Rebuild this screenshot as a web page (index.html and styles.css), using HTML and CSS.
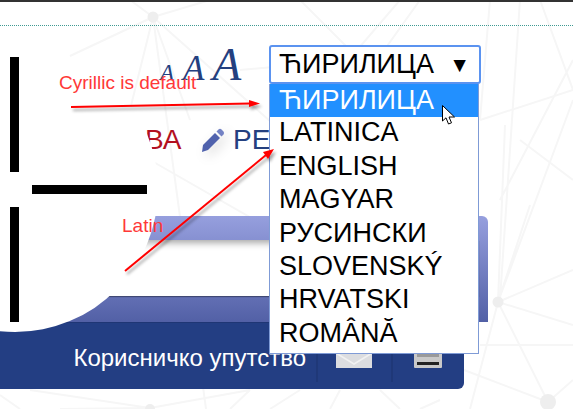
FILE: index.html
```html
<!DOCTYPE html>
<html lang="sr">
<head>
<meta charset="utf-8">
<title>Језик</title>
<link rel="stylesheet" href="styles.css">
</head>
<body>
<div class="page">
  <svg class="network" width="573" height="409" viewBox="0 0 573 409">
    <g class="net-lines">
      <path d="M153 17 70 56M153 17 206 409M153 17 120 150M153 17 280 130M153 17 210 0M130 0 153 17M153 17 190 120M150 160 290 240M240 70 330 62"/>
      <path d="M300 0 400 100M400 0 340 70M420 0 370 70M490 0 480 120M520 0 500 300M498 302 573 270M498 302 573 325M498 302 548 402M498 302 505 125M498 302 530 205M498 302 470 409M498 302 573 100M480 345 573 345M464 370 548 402M548 402 573 380M573 60 500 200M540 0 573 90"/>
      <path d="M150 408 30 390M150 408 60 409M150 408 250 390M250 390 230 409M300 390 270 409M340 390 330 409M380 390 400 409M440 400 420 409M0 395 20 409M480 120 573 90M520 140 573 180"/>
    </g>
    <g class="net-nodes">
      <circle cx="153" cy="17" r="5.500"/>
      <circle cx="498" cy="302" r="5.500"/>
      <circle cx="548" cy="402" r="8"/>
      <circle cx="150" cy="409" r="5"/>
    </g>
  </svg>

  <div class="topbar"></div>
  <div class="rule"></div>

  <div class="tools">
    <div class="sizes">
      <span class="size size-s">A</span>
      <span class="size size-m">A</span>
      <span class="size size-l">A</span>
    </div>
    <div class="lang">
      <div class="lang-current">
        <span>ЋИРИЛИЦА</span>
        <span class="lang-caret">▼</span>
      </div>
      <ul class="lang-menu">
        <li class="is-active">ЋИРИЛИЦА</li>
        <li>LATINICA</li>
        <li>ENGLISH</li>
        <li>MAGYAR</li>
        <li>РУСИНСКИ</li>
        <li>SLOVENSKÝ</li>
        <li>HRVATSKI</li>
        <li>ROMÂNĂ</li>
      </ul>
    </div>
  </div>

  <div class="edit">
    <span class="edit-red">ВА</span>
    <svg class="pencil" width="26" height="26" viewBox="0 0 26 26">
      <path class="pencil-body" d="M3 18 15 6l5 5L8 23l-6 2z"/>
      <path class="pencil-cap" d="M16.500 4.500 18.500 2.500q1.500-1.300 3 0l2 2q1.300 1.500 0 3L21.500 9.500z"/>
    </svg>
    <span class="edit-blue">РЕ</span>
  </div>

  <div class="band">
    <div class="band-strip"></div>
  </div>

  <div class="footer">
    <span class="footer-link">Корисничко упутство</span>
    <span class="footer-cell footer-cell-mail">
      <svg width="36" height="17" viewBox="0 0 36 17">
        <rect class="env" width="36" height="17"/>
        <path class="env-fold" d="M0 2 18 13 36 2"/>
      </svg>
    </span>
    <span class="footer-cell footer-cell-print">
      <svg width="28" height="16" viewBox="0 0 28 16">
        <rect class="prn" width="28" height="16" rx="1"/>
        <rect class="prn-top" x="3" y="1" width="22" height="4"/>
        <rect class="prn-slot" x="3" y="10" width="22" height="3"/>
      </svg>
    </span>
  </div>

  <div class="logo">
    <div class="logo-col">
      <i class="bar-v"></i>
      <i class="bar-v"></i>
    </div>
    <i class="bar-h"></i>
  </div>

  <svg class="arrows" width="573" height="409" viewBox="0 0 573 409">
    <defs>
      <filter id="soft" x="-10%" y="-50%" width="120%" height="200%">
        <feDropShadow dx="2" dy="3" stdDeviation="1.500" flood-color="#000" flood-opacity=".35"/>
      </filter>
    </defs>
    <g filter="url(#soft)">
      <path class="arrow-line" d="M71 107 250 103.500"/>
      <path class="arrow-head" d="M249 100 260 103.500 249 107z"/>
      <path class="arrow-line" d="M125 271 266 155"/>
      <path class="arrow-head" d="M263 152 274 149 268 159z"/>
    </g>
  </svg>

  <span class="note note-default">Cyrillic is default</span>
  <span class="note note-latin">Latin</span>

  <svg class="cursor" width="15" height="21" viewBox="0 0 15 21">
    <path class="cursor-shape" d="M.5.5V16L4 12.800 6.500 19 9.500 17.800 7 12H12.500z"/>
  </svg>
</div>
</body>
</html>
```
FILE: styles.css
```css
* { box-sizing: border-box; }
html, body { margin: 0; padding: 0; background: #fff; }
body { font-family: "Liberation Sans", Arial, sans-serif; }

.page {
  position: relative;
  width: 573px;
  height: 409px;
  overflow: hidden;
  background: #fff;
}

.network { position: absolute; left: 0; top: 0; }
.net-lines path { fill: none; stroke: #f6f6f6; stroke-width: 2; }
.net-nodes circle { fill: #eeeeee; }

.topbar { position: relative; height: 2px; background: #333; }
.rule { position: relative; height: 24px; border-bottom: 1px dotted #3f9a92; }

.tools {
  position: relative;
  display: flex;
  align-items: flex-start;
  height: 39px;
  margin-top: 19px;
  padding-left: 160px;
}
.sizes {
  display: flex;
  align-items: baseline;
  width: 109px;
  height: 39px;
  color: #24407f;
  font-family: "Liberation Serif", serif;
  font-style: italic;
  line-height: 39px;
}
.size-s { font-size: 23px; margin-right: 9px; }
.size-m { font-size: 35px; margin-right: 8px; }
.size-l { font-size: 47px; }

.lang { position: relative; z-index: 3; width: 212px; color: #000; font-size: 27px; }
.lang-current {
  display: flex;
  justify-content: space-between;
  align-items: center;
  height: 39px;
  padding: 0 9px 0 8px;
  background: #fff;
  border: 2px solid #5b93f0;
  border-radius: 3px;
}
.lang-caret { font-size: 21px; }
.lang-menu {
  position: absolute;
  left: 0;
  top: 39px;
  width: 210px;
  margin: 0;
  padding: 0 0 1.800px;
  list-style: none;
  background: #fff;
  border: 1px solid #7f9bd6;
  border-top: 0;
}
.lang-menu li { height: 33.400px; line-height: 31px; padding-left: 9px; }
.lang-menu li:first-child { line-height: 32px; }
.lang-menu .is-active { background: #2290ff; color: #fff; }

.edit {
  position: relative;
  display: flex;
  align-items: center;
  height: 34px;
  margin-top: 39px;
  padding-left: 145px;
  font-size: 28px;
  line-height: 34px;
}
.edit-red { color: #b3101f; width: 55px; }
.pencil { filter: blur(.4px) drop-shadow(4px 4px 6px rgba(0, 0, 0, .14)); }
.pencil-body { fill: #5062ad; }
.pencil-cap { fill: #7382c4; }
.edit-blue { color: #24407f; margin-left: 7px; }

.band {
  position: relative;
  display: flex;
  align-items: center;
  width: 488px;
  height: 106px;
  margin-top: 59px;
  background: linear-gradient(#969fde, #5260a6);
  border-radius: 0 6px 0 0;
}
.band-strip {
  width: 479px;
  height: 56px;
  margin-top: -2px;
  background: #fff;
  box-shadow: inset 0 8px 7px -5px rgba(0, 0, 0, .35), 0 1px 1px rgba(0, 0, 0, .35);
}

.footer {
  position: relative;
  display: flex;
  justify-content: flex-end;
  align-items: flex-start;
  width: 464px;
  height: 67px;
  background: #233e83;
  border-top: 1px solid #1f3675;
  border-radius: 0 0 6px 0;
  color: #fff;
}
.footer-link { margin: 21px 10px 0 0; font-size: 24px; line-height: 28px; }
.footer-cell {
  display: flex;
  align-items: flex-start;
  width: 75px;
  height: 42px;
  margin-top: 17px;
  padding-top: 11px;
  border-left: 2px solid #1f3878;
}
.footer-cell-mail { padding-left: 18px; }
.footer-cell-print { width: 73px; padding-left: 21px; padding-top: 12px; }
.env { fill: #dcdde0; }
.env-fold { fill: none; stroke: #f1f1f1; stroke-width: 1.500; }
.prn { fill: #c9c9c9; }
.prn-top { fill: #9a9a9a; }
.prn-slot { fill: #222; }

.logo {
  position: absolute;
  left: -128px;
  top: 46px;
  display: flex;
  align-items: center;
  gap: 13px;
  width: 286px;
  height: 286px;
  padding-left: 138px;
  background: #fff;
  border-radius: 50%;
}
.logo-col { display: flex; flex-direction: column; gap: 35px; }
.bar-v { display: block; width: 9px; height: 115px; background: #000; }
.bar-h { display: block; width: 115px; height: 9px; background: #000; }

.arrows { position: absolute; left: 0; top: 0; z-index: 4; pointer-events: none; }
.arrow-line { fill: none; stroke: #f00; stroke-width: 2; }
.arrow-head { fill: #f00; }

.note { position: absolute; z-index: 5; color: #ff3838; font-size: 19px; line-height: 22px; }
.note-default { left: 59px; top: 72px; }
.note-latin { left: 122px; top: 215px; }

.cursor { position: absolute; left: 442px; top: 105px; z-index: 6; }
.cursor-shape { fill: #fff; stroke: #000; stroke-width: 1; }
```
